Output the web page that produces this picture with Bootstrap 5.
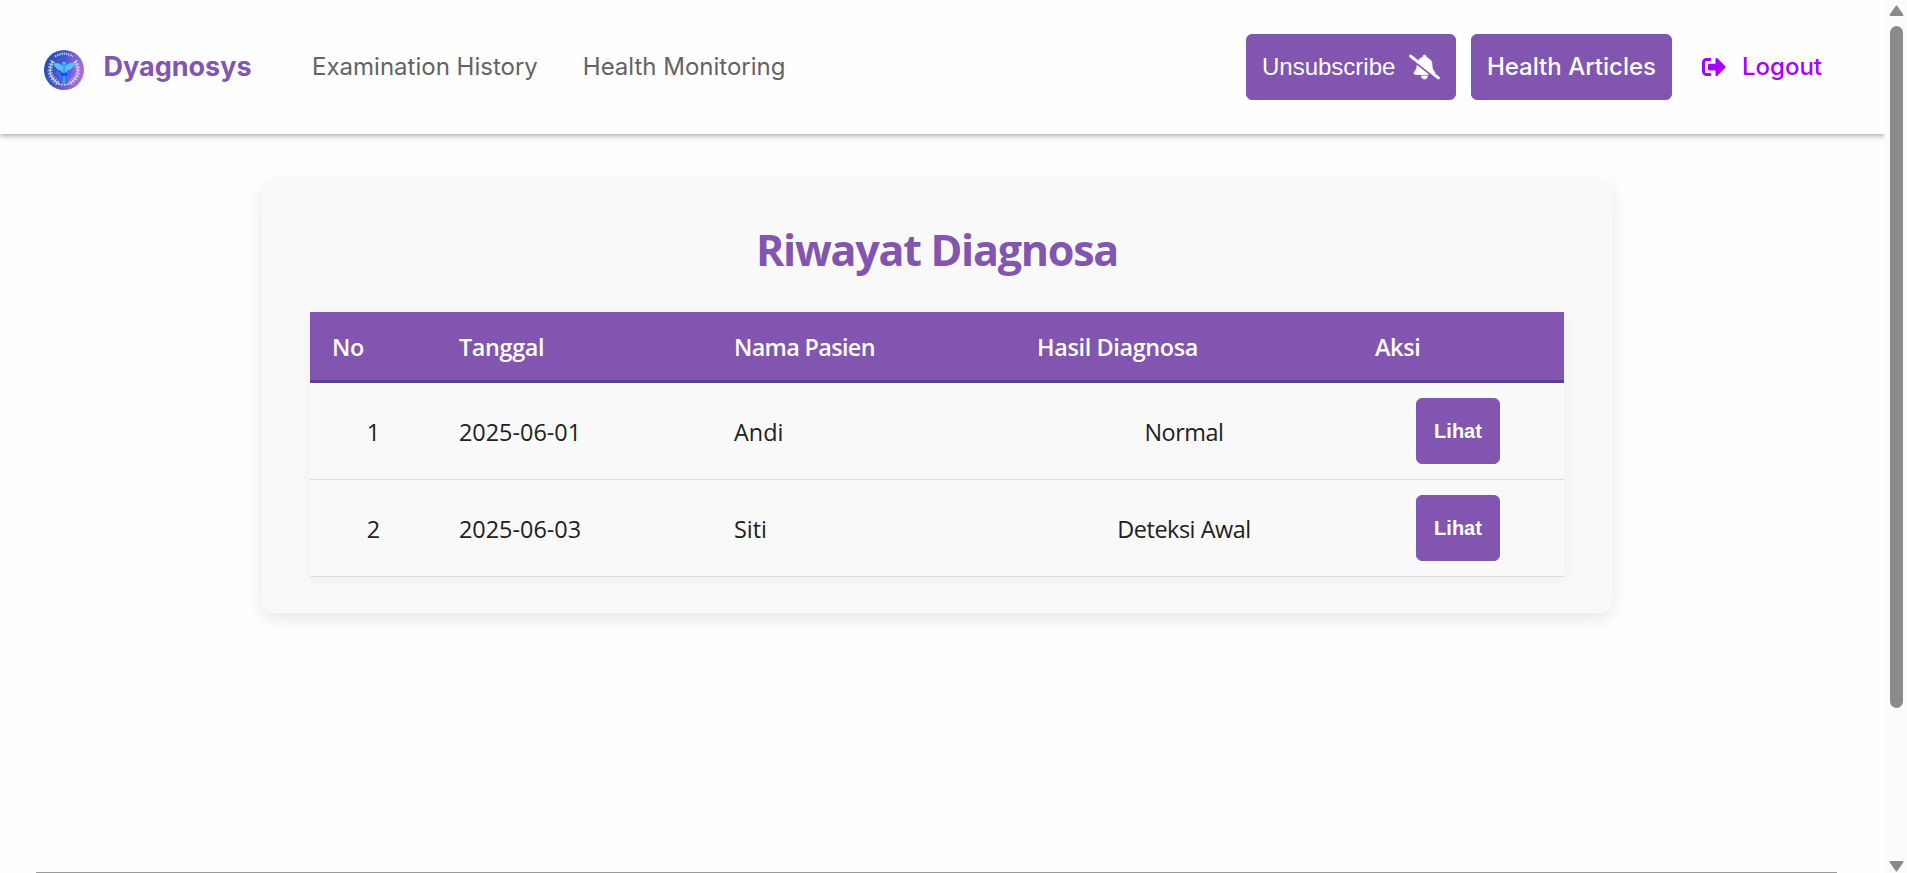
<!DOCTYPE html>
<html lang="id">
<head>
<meta charset="utf-8">
<meta name="viewport" content="width=device-width, initial-scale=1">
<title>Dyagnosys - Riwayat Diagnosa</title>
<link href="https://cdn.jsdelivr.net/npm/bootstrap@5.3.0/dist/css/bootstrap.min.css" rel="stylesheet">
<style>
  :root { --brand: #8155b0; }
  body { background: #fefefe; font-family: "Open Sans", "Noto Sans", sans-serif; color: #212121; }
  .topbar { height: 134px; padding: 0 35px 0 44px; background: #fefefe; box-shadow: 0 2px 5px rgba(0,0,0,.32); font-family: Inter, sans-serif; font-size: 24px; line-height: 36px; }
  .brand-name { color: var(--brand); font-weight: 700; font-size: 27px; margin-left: 19.5px; }
  .brand-logo { margin-top: 6px; }
  .menu { margin-left: 60.5px; gap: 45px; }
  .menu a { color: #636363; text-decoration: none; }
  .btn-brand { --bs-btn-color: #fff; --bs-btn-bg: var(--brand); --bs-btn-border-color: var(--brand); --bs-btn-hover-color: #fff; --bs-btn-hover-bg: #5d3e92; --bs-btn-border-radius: 6px; --bs-btn-padding-y: 0; --bs-btn-padding-x: 15px; height: 66px; font-size: 24px; }
  .btn-unsub { width: 210px; font-family: "Liberation Sans", Arial, sans-serif; }
  .btn-articles { width: 201px; padding: 0; font-weight: 500; margin-left: 15px; }
  .logout { color: #a800ff; text-decoration: none; font-weight: 500; margin: 0 28px 0 30px; }
  .history { width: 1350px; margin: 45px 0 0 262px; padding: 48px; height: 434px; border: 0; border-radius: 12px; background: #f9f9f9; box-shadow: 0 6px 18px rgba(0,0,0,.09); }
  .history h1 { color: var(--brand); font-weight: 700; font-size: 43px; letter-spacing: -1.25px; line-height: 45px; margin-bottom: 40px; }
  .records { table-layout: fixed; border-collapse: separate; border-spacing: 0; font-size: 23.4px; line-height: 36px; margin: 0; box-shadow: 0 3px 12px rgba(0,0,0,.05); --bs-table-bg: #f9f9f9; --bs-table-color: #212121; }
  .records > thead th { height: 71px; background: var(--brand); color: #fff; font-weight: 600; letter-spacing: -.35px; border-bottom: 3px solid #5d3e92; padding: 2px 22px 0; vertical-align: middle; }
  .records > thead th.patient { letter-spacing: -.65px; }
  .records > tbody td { height: 97px; padding: 2px 22px 0; border-bottom: 1px solid #dcdcdc; vertical-align: middle; }
  .records > tbody td.result { letter-spacing: -.45px; }
  .records > tbody td:last-child { padding-top: 0; padding-right: 23px; }
  .btn-view { width: 84px; padding: 0; font: 700 20px "Liberation Sans", Arial, sans-serif; }
  .page-rule { height: 1px; background: #999; margin: 0 48px 0 36px; }
  .track { width: 22px; background: #fcfcfc; padding: 5px 4px 1px 5px; }
  .thumb { width: 13px; height: 682px; border-radius: 7px; background: #8b8b8b; margin-top: 10px; }
</style>
</head>
<body>
<div class="d-flex vh-100 overflow-hidden">
  <div class="d-flex flex-column flex-grow-1 overflow-hidden">
    <header class="topbar d-flex align-items-center flex-shrink-0">
      <svg class="brand-logo" width="40" height="40" viewBox="0 0 40 40" aria-hidden="true">
        <defs><linearGradient id="lg" x1="0" y1=".2" x2="1" y2=".5"><stop offset="0" stop-color="#164fa9"/><stop offset=".5" stop-color="#5358cb"/><stop offset="1" stop-color="#b969dc"/></linearGradient></defs>
        <circle cx="20" cy="20" r="20" fill="url(#lg)"/>
        <path d="M11 6.500Q20 1 29 6.500" fill="none" stroke="#c5cbee" stroke-width="2" stroke-dasharray="1.400 .9"/>
        <g fill="none" stroke="#cdd4e3">
          <path d="M9 11Q1 25 15 34M31 11Q39 25 25 34" stroke-width="1.200"/>
          <path d="M9 11Q1 25 15 34M31 11Q39 25 25 34" stroke-width="5" stroke-dasharray="1.500 1.500" opacity=".75"/>
          <path d="M14 33.500Q20 36 26 33.500" stroke-width="1.500" stroke-dasharray="2 1"/>
        </g>
        <path d="M9.500 13.500Q15 12 18.500 16V12h3v4Q25 12 31 13.500Q29 19 23.500 20.500L22 22h-4l-1.500-1.500Q11 19 9.500 13.500z" fill="#55c3fb"/>
        <circle cx="20" cy="8.500" r="2.200" fill="#225ff0"/>
        <path d="M14 21q-2 5 6 5q6 2 0 6M26 21q2 5-6 5q-6 2 0 6" fill="none" stroke="#2873ff" stroke-width="2.400"/>
        <path d="M20 14v20" stroke="#34a5ff" stroke-width="2.400"/><path d="M17 24.500h6" stroke="#1b2cff" stroke-width="2"/>
      </svg>
      <span class="brand-name">Dyagnosys</span>
      <nav class="menu d-flex"><a href="#">Examination History</a><a href="#">Health Monitoring</a></nav>
      <div class="d-flex align-items-center ms-auto">
        <button type="button" class="btn btn-brand btn-unsub d-flex align-items-center justify-content-between">Unsubscribe
          <svg width="31" height="24" viewBox="0 0 640 512" fill="currentColor" stroke="currentColor" stroke-width="18" stroke-linejoin="round" overflow="visible" aria-hidden="true"><path d="M38.800 5.100C28.400-3.100 13.300-1.200 5.100 9.200S-1.200 34.700 9.200 42.900l592 464c10.400 8.200 25.500 6.300 33.700-4.100s6.300-25.500-4.100-33.700l-90.200-70.700c.2-.4 .4-.9 .6-1.300c5.200-11.500 3.100-25-5.300-34.400l-7.400-8.300C497.300 319.200 480 273.900 480 226.800l0-18.800c0-77.400-55-142-128-156.800L352 32c0-17.700-14.300-32-32-32s-32 14.300-32 32l0 19.200c-42.600 8.600-79 34.200-102 69.300L38.800 5.100zM406.200 416L160 222.100l0 4.800c0 47-17.300 92.400-48.500 127.600l-7.400 8.300c-8.400 9.400-10.400 22.900-5.300 34.400S115.400 416 128 416l278.200 0zm-40.900 77.300c12-12 18.700-28.300 18.700-45.300l-64 0-64 0c0 17 6.700 33.300 18.700 45.300s28.300 18.700 45.300 18.700s33.300-6.700 45.300-18.700z"/></svg>
        </button>
        <a href="#" class="btn btn-brand btn-articles d-flex align-items-center justify-content-center">Health Articles</a>
        <a href="#" class="logout d-flex align-items-center">
          <svg class="me-3" width="24" height="24" viewBox="0 0 512 512" fill="currentColor" aria-hidden="true"><path d="M497 273L329 441c-15 15-41 4.500-41-17v-96H152c-13.300 0-24-10.700-24-24v-96c0-13.300 10.700-24 24-24h136V88c0-21.400 25.900-32 41-17l168 168c9.300 9.400 9.300 24.600 0 34zM192 436v-40c0-6.600-5.400-12-12-12H96c-17.700 0-32-14.300-32-32V160c0-17.700 14.300-32 32-32h84c6.600 0 12-5.400 12-12V76c0-6.600-5.400-12-12-12H96c-53 0-96 43-96 96v192c0 53 43 96 96 96h84c6.600 0 12-5.400 12-12z"/></svg>
          <span>Logout</span>
        </a>
      </div>
    </header>
    <main class="flex-grow-1">
      <section class="card history">
        <h1 class="text-center">Riwayat Diagnosa</h1>
        <table class="table records">
          <colgroup><col style="width:127px"><col style="width:275px"><col style="width:303px"><col style="width:338px"><col style="width:211px"></colgroup>
          <thead><tr><th>No</th><th>Tanggal</th><th class="patient">Nama Pasien</th><th>Hasil Diagnosa</th><th>Aksi</th></tr></thead>
          <tbody>
            <tr><td class="text-center">1</td><td>2025-06-01</td><td>Andi</td><td class="text-center result">Normal</td><td class="text-center"><button type="button" class="btn btn-brand btn-view">Lihat</button></td></tr>
            <tr><td class="text-center">2</td><td>2025-06-03</td><td>Siti</td><td class="text-center result">Deteksi Awal</td><td class="text-center"><button type="button" class="btn btn-brand btn-view">Lihat</button></td></tr>
          </tbody>
        </table>
      </section>
    </main>
    <div class="page-rule flex-shrink-0"></div>
  </div>
  <div class="track d-flex flex-column flex-shrink-0" aria-hidden="true">
    <svg class="flex-shrink-0" width="13" height="11" viewBox="0 0 13 11" overflow="visible"><path d="M6.500 1.500L12.500 10h-12z" fill="#8b8b8b" stroke="#8b8b8b" stroke-width="2" stroke-linejoin="round"/></svg>
    <div class="thumb flex-shrink-0"></div>
    <svg class="mt-auto flex-shrink-0" width="13" height="11" viewBox="0 0 13 11" overflow="visible"><path d="M6.500 9.500L12.500 1h-12z" fill="#8b8b8b" stroke="#8b8b8b" stroke-width="2" stroke-linejoin="round"/></svg>
  </div>
</div>
<script src="https://cdn.jsdelivr.net/npm/bootstrap@5.3.0/dist/js/bootstrap.bundle.min.js"></script>
</body>
</html>
